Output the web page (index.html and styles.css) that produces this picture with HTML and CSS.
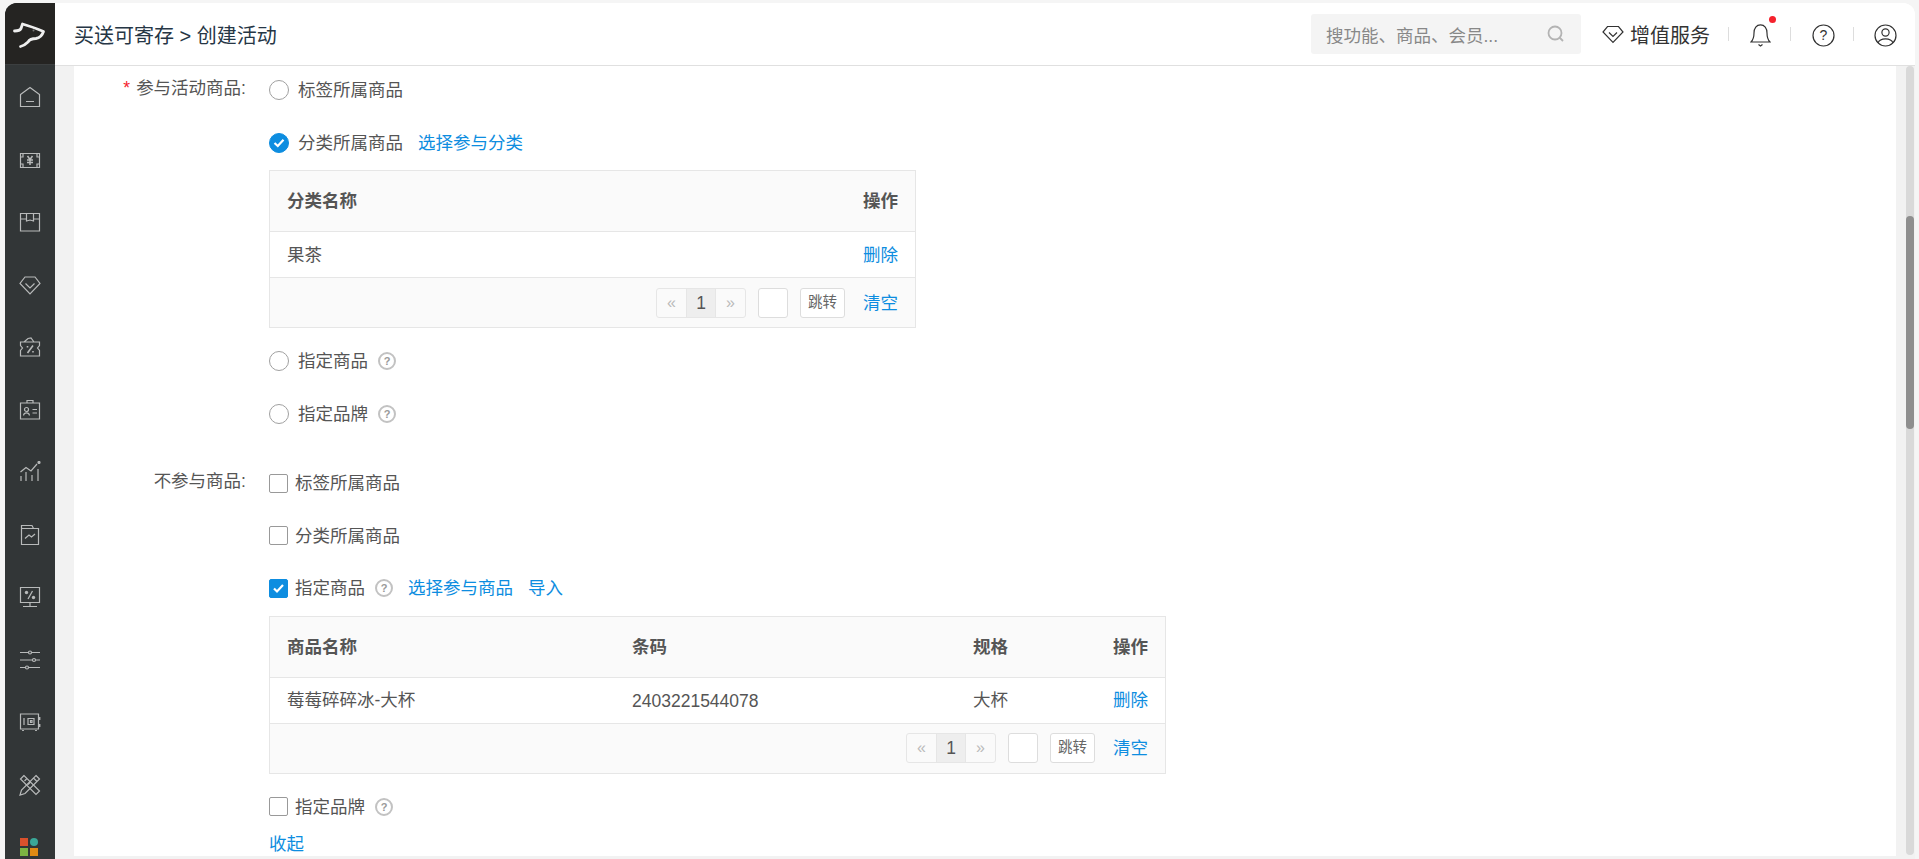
FILE: index.html
```html
<!DOCTYPE html>
<html lang="zh-CN">
<head>
<meta charset="utf-8">
<title>创建活动</title>
<link rel="stylesheet" href="styles.css">
</head>
<body>
<div class="app">
  <aside class="side">
    <div class="logo">
      <svg width="34" height="30" viewBox="12 20 34 30" fill="none"><path d="M14.500 31 C17 31 20 30.500 21 28.500 L22.500 24 C28 25.500 34 27.500 43.500 31.500 C42 36 39 38 36 38.500 C32 38.500 29.500 39.500 28 42 C26 44 23 46 20.500 46.500" stroke="#eee" stroke-width="2.800" stroke-linecap="round" stroke-linejoin="round"/><circle cx="33.500" cy="30.500" r="1" fill="#777"/></svg>
    </div>
    <nav class="nav">
      <a class="nav-i"><svg width="22" height="22" viewBox="0 0 22 22" fill="none" stroke="#b8baba" stroke-width="1.200"><path d="M1.500 8.500 L11 1.500 L20.500 8.500 V20.500 H1.500 Z M7 15.500 H15"/></svg></a>
      <a class="nav-i"><svg width="22" height="22" viewBox="0 0 22 22" fill="none" stroke="#b8baba" stroke-width="1.200"><path d="M1.500 4.500 H20.500 V18.500 H1.500 Z M1.500 8 H4 V4.500 M18 4.500 V8 H20.500 M1.500 15 H4 V18.500 M18 18.500 V15 H20.500"/><path d="M8.500 7 L11 10.500 L13.500 7 M8 11 H14 M8 13.500 H14 M11 10.500 V16" stroke-width="1.500"/></svg></a>
      <a class="nav-i"><svg width="22" height="22" viewBox="0 0 22 22" fill="none" stroke="#b8baba" stroke-width="1.200"><path d="M1.500 2.500 H20.500 V20 H1.500 Z M1.500 8 H7.500 V2.500 M7.500 2.500 V10 L11 9 L14.500 10 V2.500 M14.500 8 H20.500"/></svg></a>
      <a class="nav-i"><svg width="22" height="22" viewBox="0 0 22 22" fill="none" stroke="#b8baba" stroke-width="1.200"><path d="M6 3 H16 L21 9.500 L11 20 L1 9.500 Z M6.500 9.500 L11 14 L15.500 9.500"/></svg></a>
      <a class="nav-i"><svg width="22" height="22" viewBox="0 0 22 22" fill="none" stroke="#b8baba" stroke-width="1.200"><path d="M1.500 6 H20.500 V9.500 L18.500 12 L20.500 14.500 V20 H1.500 V14.500 L3.500 12 L1.500 9.500 Z M5 6 L9 2.500 L12 2 L15 6"/><path d="M14 9.500 L8.500 17 M8.500 10 V11.500 M14 15 V16.500" stroke-width="1.600"/></svg></a>
      <a class="nav-i"><svg width="22" height="22" viewBox="0 0 22 22" fill="none" stroke="#b8baba" stroke-width="1.200"><path d="M1.500 4 H20.500 V20 H1.500 Z M8 4 V1.500 H14 V4 M4.500 16.500 C5 13 10 13 10.500 16.500 M13.500 10.500 H18 M13.500 14 H18"/><circle cx="7.500" cy="10.500" r="2"/></svg></a>
      <a class="nav-i"><svg width="22" height="22" viewBox="0 0 22 22" fill="none" stroke="#b8baba" stroke-width="1.200"><path d="M1.500 11 L7 6.500 L12 10 L18 3 M2 20 V15 M7 20 V11 M13 20 V14 M19 20 V8"/><circle cx="20" cy="1.500" r="1" fill="#b8baba"/></svg></a>
      <a class="nav-i"><svg width="22" height="22" viewBox="0 0 22 22" fill="none" stroke="#b8baba" stroke-width="1.200"><path d="M2.500 1.500 H13 L14.500 4.500 H19.500 V20.500 H2.500 Z M2.500 4.500 H14.500"/><path d="M6 14.500 L10 11 L12.500 13 L16 10"/></svg></a>
      <a class="nav-i"><svg width="22" height="22" viewBox="0 0 22 22" fill="none" stroke="#b8baba" stroke-width="1.200"><path d="M1.500 1.500 H20.500 V16.500 H1.500 Z M11 16.500 V20 M4 20.500 H18"/><path d="M13.500 5 L9 13" stroke-width="1.300"/><circle cx="7.500" cy="6.500" r="1.700" fill="#b8baba" stroke="none"/><circle cx="14.500" cy="11.500" r="1.700" fill="#b8baba" stroke="none"/></svg></a>
      <a class="nav-i"><svg width="22" height="22" viewBox="0 0 22 22" fill="none" stroke="#b8baba" stroke-width="1.200"><path d="M1 3.500 H21 M1 11 H21 M1 18.500 H21"/><circle cx="11" cy="3.500" r="1.500" fill="#323637"/><circle cx="15" cy="11" r="1.500" fill="#323637"/><circle cx="8" cy="18.500" r="1.500" fill="#323637"/></svg></a>
      <a class="nav-i"><svg width="22" height="22" viewBox="0 0 22 22" fill="none" stroke="#b8baba" stroke-width="1.200"><path d="M1.500 3 H19.500 V18 H1.500 Z M5 7 V14"/><path d="M9 7.500 H15 V13.500 H9 Z M11.500 9.500 H13 V11.500 H11.500 Z"/><path d="M20.500 6 V9 M20.500 13 V16 M4 19 V20 M17 19 V20" stroke-width="1.800"/></svg></a>
      <a class="nav-i"><svg width="22" height="22" viewBox="0 0 22 22" fill="none" stroke="#b8baba" stroke-width="1.200"><path d="M5 1.500 L1.500 5 L17 20.500 L20.500 17 Z M5.500 7 L7.500 5 M9 10.500 L11 8.500"/><path d="M17 1.500 L20.500 5 L6 19.500 L1 21 L2.500 16 Z M14.500 4 L18 7.500"/></svg></a>
    </nav>
    <div class="apps"><i class="a1"></i><i class="a2"></i><i class="a3"></i><i class="a4"></i></div>
  </aside>
  <div class="main">
    <header class="top">
      <h1 class="title">买送可寄存 &gt; 创建活动</h1>
      <div class="search"><span>搜功能、商品、会员...</span>
        <svg width="18" height="18" viewBox="0 0 18 18" fill="none" stroke="#b3b3b3" stroke-width="1.800"><circle cx="8" cy="8" r="6.500"/><path d="M12.500 12.500 L16 16"/></svg>
      </div>
      <div class="vip">
        <svg width="22" height="19" viewBox="0 0 22 19" fill="none" stroke="#333" stroke-width="1.200"><path d="M5.500 1.500 H16.500 L21 7 L11 17.500 L1 7 Z M7 7.500 L11 11.500 L15 7.500"/></svg>
        <span>增值服务</span>
      </div>
      <i class="sep"></i>
      <div class="ico bell">
        <svg width="21" height="23" viewBox="0 0 21 23" fill="none" stroke="#333" stroke-width="1.200"><path d="M1 18 H20 C18 16 17 14 17 9 C17 4 14.500 0.800 10.500 0.800 C6.500 0.800 4 4 4 9 C4 14 3 16 1 18 Z M8.500 20.500 L10.500 22 L12.500 20.500"/></svg>
        <b class="dot"></b>
      </div>
      <i class="sep"></i>
      <div class="ico">
        <svg width="23" height="23" viewBox="0 0 23 23" fill="none"><circle cx="11.500" cy="11.500" r="10.500" stroke="#333" stroke-width="1.200"/><text x="11.500" y="16" text-anchor="middle" class="q">?</text></svg>
      </div>
      <i class="sep"></i>
      <div class="ico">
        <svg width="23" height="23" viewBox="0 0 23 23" fill="none" stroke="#333" stroke-width="1.200"><circle cx="11.500" cy="11.500" r="10.500"/><circle cx="11.500" cy="8.500" r="3.600"/><path d="M4 19 C6 13.500 17 13.500 19 19"/></svg>
      </div>
    </header>
    <div class="body">
      <main class="page">
        <section class="group">
          <div class="label"><em>*</em>参与活动商品:</div>
          <div class="opts">
            <div class="opt"><span class="radio"></span><span class="tx">标签所属商品</span></div>
            <div class="opt"><span class="radio on"><svg width="12" height="10" viewBox="0 0 12 10" fill="none" stroke="#fff" stroke-width="2.200"><path d="M1.500 5 L4.800 8 L10.500 1.800"/></svg></span><span class="tx">分类所属商品</span><a class="link tx l15">选择参与分类</a></div>
            <div class="tbl t1">
              <div class="tr th"><span class="tx c-f">分类名称</span><span class="tx">操作</span></div>
              <div class="tr td"><span class="tx c-f">果茶</span><a class="link tx">删除</a></div>
              <div class="tf">
                <div class="pager"><span class="pg off">«</span><span class="pg cur">1</span><span class="pg off">»</span></div>
                <span class="jump"></span><span class="go">跳转</span><a class="link tx clr">清空</a>
              </div>
            </div>
            <div class="opt"><span class="radio"></span><span class="tx">指定商品</span><span class="help">?</span></div>
            <div class="opt"><span class="radio"></span><span class="tx">指定品牌</span><span class="help">?</span></div>
          </div>
        </section>
        <section class="group g2">
          <div class="label">不参与商品:</div>
          <div class="opts">
            <div class="opt"><span class="check"></span><span class="tx">标签所属商品</span></div>
            <div class="opt"><span class="check"></span><span class="tx">分类所属商品</span></div>
            <div class="opt"><span class="check on"><svg width="13" height="11" viewBox="0 0 13 11" fill="none" stroke="#fff" stroke-width="2.200"><path d="M2 5.500 L5 8.500 L11 2"/></svg></span><span class="tx">指定商品</span><span class="help">?</span><a class="link tx l15">选择参与商品</a><a class="link tx l15">导入</a></div>
            <div class="tbl t2">
              <div class="tr th"><span class="tx c-n">商品名称</span><span class="tx c-b">条码</span><span class="tx c-s">规格</span><span class="tx c-o">操作</span></div>
              <div class="tr td"><span class="tx c-n">莓莓碎碎冰-大杯</span><span class="num c-b">2403221544078</span><span class="tx c-s">大杯</span><a class="link tx c-o">删除</a></div>
              <div class="tf">
                <div class="pager"><span class="pg off">«</span><span class="pg cur">1</span><span class="pg off">»</span></div>
                <span class="jump"></span><span class="go">跳转</span><a class="link tx clr">清空</a>
              </div>
            </div>
            <div class="opt o-b"><span class="check"></span><span class="tx">指定品牌</span><span class="help">?</span></div>
            <a class="link fold">收起</a>
          </div>
        </section>
      </main>
      <div class="bar"><div class="track"><div class="thumb"></div></div></div>
    </div>
  </div>
</div>
</body>
</html>
```
FILE: styles.css
```css
* { box-sizing: border-box; }
html, body { margin: 0; height: 100%; overflow: hidden; }
body {
  background: #f5f5f5;
  font-family: "Liberation Sans", "Noto Sans CJK SC", sans-serif;
  font-size: 17.5px;
  font-weight: 400;
  color: #555;
  padding: 3px 4px 0 5px;
}
.app { display: flex; height: 856px; border-radius: 12px 12px 0 0; overflow: hidden; background: #fff; }

.side { width: 50px; flex: none; background: #323637; display: flex; flex-direction: column; overflow: hidden; }
.logo { height: 62px; flex: none; background: #252422; border-bottom: 1px solid #3c3f40; display: flex; align-items: center; justify-content: center; }
.logo svg { margin: 3px 2px 0 0; }
.nav { display: flex; flex-direction: column; padding-top: 1px; }
.nav-i { height: 62.5px; display: flex; align-items: center; justify-content: center; }
.apps { margin: 22px 0 0 15px; display: grid; grid-template-columns: 8px 8px; gap: 2px; }
.apps i { display: block; height: 8px; width: 8px; }
.a1 { background: #d9512c; }
.a2 { background: #3aa798; border-radius: 50%; }
.a3 { background: #7cb342; }
.a4 { background: #e08a14; }

.main { flex: 1; min-width: 0; display: flex; flex-direction: column; }
.top { height: 63px; flex: none; display: flex; align-items: center; padding: 0 18px 0 19px; background: #fff; border-bottom: 1px solid #e0e0e0; }
.title { margin: 0 auto 0 0; font-size: 20px; font-weight: 400; color: #263645; }
.search { width: 270px; height: 40px; background: #f4f4f4; border-radius: 3px; display: flex; align-items: center; justify-content: space-between; padding: 0 16px 0 15px; color: #888; margin-right: 21px; }
.search svg { flex: none; }
.vip { display: flex; align-items: center; gap: 6px; color: #333; font-size: 20px; }
.vip svg { flex: none; }
.sep { display: block; width: 1px; height: 14px; background: #ddd; margin: 0 21px 0 18px; }
.ico { position: relative; display: flex; margin-top: 3px; }
.bell { width: 21px; margin-right: 1px; }
.ico + .sep + .ico + .sep { margin-right: 20px; }
.dot { position: absolute; top: -8px; right: -5px; width: 7px; height: 7px; border-radius: 50%; background: #f5222d; }
.q { font-size: 14px; fill: #333; }

.body { flex: 1; min-height: 0; display: flex; background: #f2f2f2; padding: 0 0 3px 19px; }
.page { flex: 1; min-width: 0; background: #fff; overflow: hidden; padding-top: 6px; }
.bar { width: 19px; flex: none; padding: 0 1px 1px 10px; }
.track { height: 100%; background: #d9d9d9; border-radius: 4px; padding-top: 150px; }
.thumb { height: 213px; background: #8e8e8e; border-radius: 4px; }

.group { display: flex; }
.g2 { margin-top: 17px; }
.label { width: 195px; flex: none; text-align: right; line-height: 33px; height: 36px; padding-right: 23px; }
.label em { color: #f5222d; font-style: normal; margin-right: 6px; }
.opts { flex: 1; min-width: 0; }
.opt { display: flex; align-items: center; height: 36px; margin-bottom: 16.5px; }
.tx { padding-bottom: 3px; }
.num { padding-top: 2px; }
.radio { width: 20px; height: 20px; flex: none; border: 1px solid #a0a0a0; border-radius: 50%; margin-right: 9px; display: flex; align-items: center; justify-content: center; background: #fff; }
.radio.on { background: #0d8de0; border-color: #0d8de0; }
.check { width: 19px; height: 19px; flex: none; border: 1px solid #999; border-radius: 2px; margin-right: 7px; display: flex; align-items: center; justify-content: center; background: #fff; }
.check.on { background: #0d8de0; border-color: #0d8de0; }
.help { width: 18px; height: 18px; border: 2px solid #c2c2c2; border-radius: 50%; margin-left: 10px; font-size: 11px; line-height: 14px; text-align: center; color: #999; font-weight: 700; }
.link { color: #0d8de0; cursor: pointer; }
.l15 { margin-left: 15px; }
.tbl { border: 1px solid #e6e6e6; margin: -7px 0 15px; }
.t1 { width: 647px; }
.t2 { width: 897px; }
.tr { display: flex; justify-content: space-between; padding: 0 17px 0 17px; align-items: center; }
.th { height: 61px; background: #fafafa; border-bottom: 1px solid #e6e6e6; font-weight: 700; }
.td { height: 46px; border-bottom: 1px solid #e6e6e6; }
.tf { height: 49px; background: #fafafa; display: flex; justify-content: flex-end; align-items: center; padding-right: 17px; }
.c-f { flex: 1; }
.c-n { width: 345px; }
.c-b { width: 341px; }
.c-s { width: 140px; }
.c-o { flex: 1; text-align: right; }
.pager { display: flex; height: 30px; border: 1px solid #e6e6e6; border-radius: 3px; background: #fafafa; }
.pg { width: 29px; line-height: 28px; text-align: center; color: #bbb; font-size: 16px; }
.pg.cur { width: 30px; background: #eee; color: #555; border-left: 1px solid #e6e6e6; border-right: 1px solid #e6e6e6; font-size: 17.5px; }
.jump { width: 30px; height: 30px; border: 1px solid #ddd; border-radius: 3px; background: #fff; margin-left: 12px; }
.go { width: 45px; height: 30px; border: 1px solid #ddd; border-radius: 3px; background: #fff; margin-left: 12px; font-size: 14.5px; line-height: 27px; text-align: center; color: #666; }
.clr { margin-left: 18px; }
.o-b { margin-bottom: 7px; }
.fold { display: block; line-height: 24px; }
```
